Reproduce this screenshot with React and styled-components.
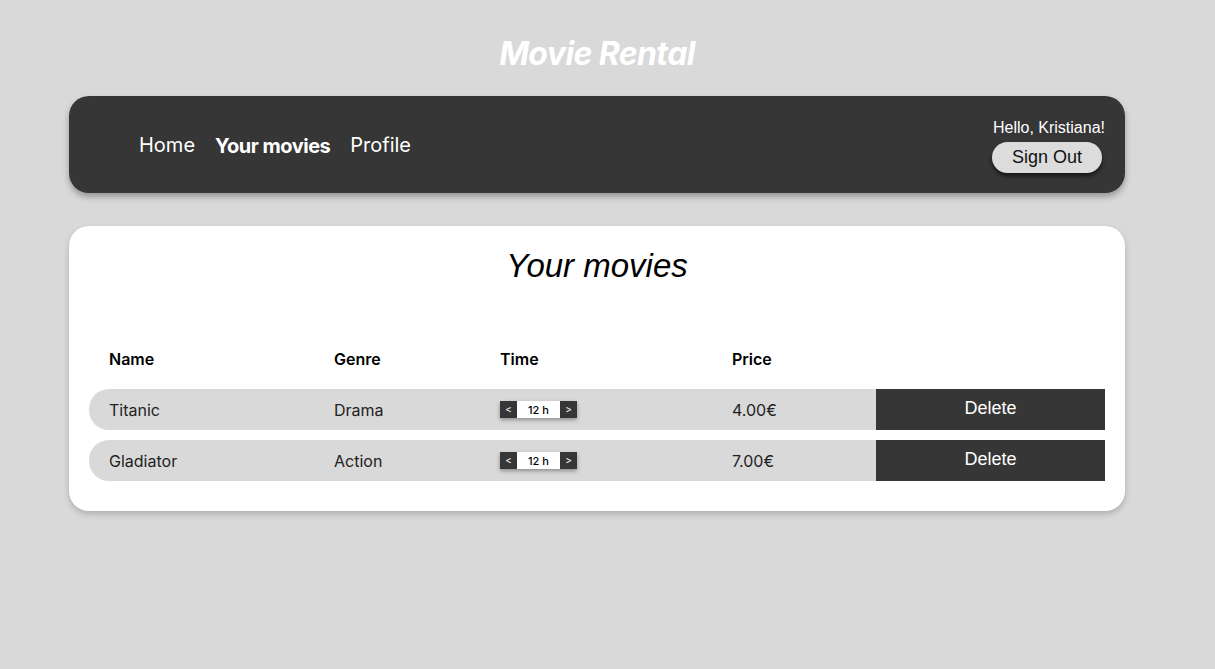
import React, { useState } from 'react';
import styled, { createGlobalStyle } from 'styled-components';

const GlobalStyle = createGlobalStyle`
  html, body {
    margin: 0;
    padding: 0;
    background: #d9d9d9;
    font-family: Inter, 'Noto Sans', sans-serif;
  }
`;

const initialMovies = [
  { id: 1, name: 'Titanic', genre: 'Drama', hours: 12, price: '4.00€' },
  { id: 2, name: 'Gladiator', genre: 'Action', hours: 12, price: '7.00€' },
];

export default function App() {
  const [movies, setMovies] = useState(initialMovies);

  const changeHours = (id, delta) => {
    setMovies((list) =>
      list.map((m) => (m.id === id ? { ...m, hours: Math.max(1, m.hours + delta) } : m))
    );
  };

  const removeMovie = (id) => {
    setMovies((list) => list.filter((m) => m.id !== id));
  };

  return (
    <Page>
      <GlobalStyle />
      <SiteTitle>Movie Rental</SiteTitle>
      <NavBar>
        <NavLinks>
          <NavLink href="#">Home</NavLink>
          <NavLink href="#" $active>Your movies</NavLink>
          <NavLink href="#">Profile</NavLink>
        </NavLinks>
        <UserBox>
          <Greeting>Hello, Kristiana!</Greeting>
          <SignOutButton>Sign Out</SignOutButton>
        </UserBox>
      </NavBar>

      <Card>
        <CardTitle>Your movies</CardTitle>
        <Table>
          <HeaderRow>
            <HeaderCell>Name</HeaderCell>
            <HeaderCell>Genre</HeaderCell>
            <HeaderCell>Time</HeaderCell>
            <HeaderCell>Price</HeaderCell>
            <HeaderCell />
          </HeaderRow>
          {movies.map((movie) => (
            <MovieRow key={movie.id}>
              <Cell>{movie.name}</Cell>
              <Cell>{movie.genre}</Cell>
              <Cell>
                <Stepper>
                  <StepButton onClick={() => changeHours(movie.id, -1)}>&lt;</StepButton>
                  <StepValue>{movie.hours} h</StepValue>
                  <StepButton onClick={() => changeHours(movie.id, 1)}>&gt;</StepButton>
                </Stepper>
              </Cell>
              <Cell>{movie.price}</Cell>
              <DeleteButton onClick={() => removeMovie(movie.id)}>Delete</DeleteButton>
            </MovieRow>
          ))}
        </Table>
      </Card>
    </Page>
  );
}

const Page = styled.div`
  width: 1056px;
  margin: 0 0 0 69px;
  padding: 33px 0 40px;
  display: flex;
  flex-direction: column;
`;

const SiteTitle = styled.h1`
  margin: 0 0 22px;
  height: 41px;
  line-height: 41px;
  text-align: center;
  color: #fff;
  font-family: Inter, sans-serif;
  font-size: 32px;
  font-weight: 700;
  font-style: italic;
  letter-spacing: -0.6px;
`;

const NavBar = styled.nav`
  height: 97px;
  box-sizing: border-box;
  padding: 0 20px 0 70px;
  background: #363636;
  border-radius: 20px;
  box-shadow: 0 4px 6px rgba(0, 0, 0, 0.3);
  display: flex;
  align-items: center;
  justify-content: space-between;
`;

const NavLinks = styled.div`
  display: flex;
  align-items: center;
  gap: 20px;
`;

const NavLink = styled.a`
  color: #fff;
  text-decoration: none;
  font-family: Inter, sans-serif;
  font-size: 20px;
  font-weight: ${(p) => (p.$active ? 700 : 400)};
  letter-spacing: ${(p) => (p.$active ? '-0.5px' : '0')};
  margin-top: ${(p) => (p.$active ? '3px' : '0')};
`;

const UserBox = styled.div`
  display: flex;
  flex-direction: column;
  align-items: flex-end;
  gap: 5px;
  margin-top: 3px;
`;

const Greeting = styled.span`
  color: #fff;
  font-family: 'Liberation Sans', Arial, sans-serif;
  font-size: 16px;
`;

const SignOutButton = styled.button`
  width: 110px;
  height: 31px;
  margin-right: 3px;
  border: none;
  border-radius: 16px;
  background: #dcdcdc;
  color: #111;
  font-family: 'Liberation Sans', Arial, sans-serif;
  font-size: 18px;
  box-shadow: 0 3px 4px rgba(0, 0, 0, 0.6);
  cursor: pointer;
`;

const Card = styled.section`
  margin-top: 33px;
  background: #fff;
  border-radius: 20px;
  box-shadow: 0 3px 6px rgba(0, 0, 0, 0.2);
  padding: 20px 20px 30px;
  box-sizing: border-box;
`;

const CardTitle = styled.h2`
  margin: 0 0 53px;
  height: 40px;
  line-height: 40px;
  text-align: center;
  color: #000;
  font-family: 'Liberation Sans', Arial, sans-serif;
  font-size: 33px;
  font-weight: 400;
  font-style: italic;
`;

const Table = styled.div`
  display: flex;
  flex-direction: column;
  gap: 10px;
`;

const columns = '225px 166px 232px 164px 229px';

const HeaderRow = styled.div`
  display: grid;
  grid-template-columns: ${columns};
  height: 40px;
  align-items: center;
`;

const HeaderCell = styled.div`
  padding-left: 20px;
  font-size: 16px;
  font-weight: 600;
  color: #000;
`;

const MovieRow = styled.div`
  display: grid;
  grid-template-columns: ${columns};
  height: 41px;
  align-items: center;
  background: #d9d9d9;
  border-radius: 20px 0 0 20px;
`;

const Cell = styled.div`
  padding-left: 20px;
  font-size: 16px;
  color: #222;
`;

const Stepper = styled.div`
  display: flex;
  align-items: center;
  width: 77px;
  height: 17px;
  background: #fff;
  box-shadow: 0 2px 4px rgba(0, 0, 0, 0.35);
`;

const StepButton = styled.button`
  width: 17px;
  height: 17px;
  padding: 0;
  border: none;
  background: #363636;
  color: #fff;
  font-family: Inter, sans-serif;
  font-size: 10px;
  line-height: 17px;
  cursor: pointer;
`;

const StepValue = styled.span`
  flex: 1;
  text-align: center;
  font-size: 11px;
  font-weight: 500;
  color: #000;
`;

const DeleteButton = styled.button`
  height: 41px;
  border: none;
  background: #363636;
  color: #fff;
  font-family: 'Liberation Sans', Arial, sans-serif;
  font-size: 18px;
  padding-bottom: 3px;
  cursor: pointer;
`;
